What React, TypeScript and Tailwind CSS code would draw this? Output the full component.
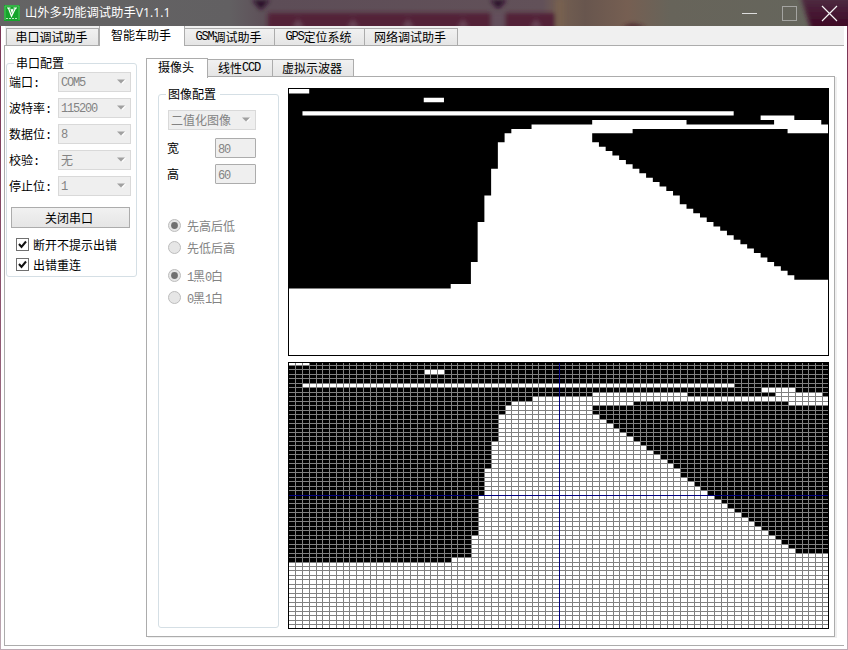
import React from "react";

const COLS = 80;
const ROWS = 60;

// White runs [row, fromCol, toCol] of the binarised camera frame.
function buildRuns(): number[][] {
  const runs: number[][] = [
    [0, 0, 3],
    [2, 20, 23],
    [5, 2, 66],
    [6, 70, 75],
    [7, 45, 59],
    [7, 72, 79],
    [8, 36, 80],
    [9, 33, 51],
    [9, 74, 80],
  ];
  const left = (r: number) =>
    r < 12 ? 32 : r < 18 ? 31 : r < 24 ? 30 : r < 30 ? 29 : r < 39 ? 28 : r < 44 ? 27 : 24;
  const right = (r: number) =>
    r < 12 ? 45 : r < 25 ? r + 34 : r + 33;
  for (let r = 10; r < 45; r++) {
    const end = r >= 43 ? COLS : right(r);
    runs.push([r, left(r), end]);
  }
  for (let r = 45; r < ROWS; r++) runs.push([r, 0, COLS]);
  return runs;
}

const RUNS = buildRuns();

function RawImage() {
  const sx = 539 / COLS;
  const sy = 266 / ROWS;
  const d = RUNS.map(
    ([r, a, b]) =>
      `M${1 + a * sx} ${1 + r * sy}H${1 + b * sx}V${1 + (r + 1) * sy}H${1 + a * sx}Z`
  ).join("");
  return (
    <svg className="block" width="541" height="268" viewBox="0 0 541 268">
      <rect width="541" height="268" fill="#000" />
      <path d={d} fill="#fff" />
    </svg>
  );
}

function GridImage() {
  const gx = (k: number) => Math.min(540, Math.max(1, Math.floor(1 + k * 6.75)));
  const gy = (k: number) => Math.min(266, Math.max(1, Math.floor(-1 + (k * 268) / 60 + 0.0001)));
  const d = RUNS.map(([r, a, b]) => `M${gx(a)} ${gy(r)}H${gx(b)}V${gy(r + 1)}H${gx(a)}Z`).join("");
  const vs = Array.from({ length: COLS - 1 }, (_, i) => `M${gx(i + 1)} 1h1v265h-1z`).join("");
  const hs = Array.from({ length: ROWS - 1 }, (_, i) => `M1 ${gy(i + 1)}h539v1h-539z`).join("");
  return (
    <svg className="block" width="541" height="267" viewBox="0 0 541 267" shapeRendering="crispEdges">
      <rect width="541" height="267" fill="#000" />
      <path d={d} fill="#fff" />
      <path d={vs} fill="#808080" />
      <path d={hs} fill="#808080" />
      <rect x={gx(40)} y="1" width="1" height="265" fill="#000080" />
      <rect x="1" y={gy(30)} width="539" height="1" fill="#000080" />
    </svg>
  );
}

// Half-width Latin text set at 6px per character.
function L({ children }: { children: React.ReactNode }) {
  return (
    <span className="font-['Liberation_Mono','Noto_Sans_CJK_SC',monospace] text-[12px] tracking-[-1.2px]">{children}</span>
  );
}

function Tab({ active, className, children }: { active?: boolean; className: string; children: React.ReactNode }) {
  return (
    <div
      className={`flex shrink-0 items-center justify-center whitespace-nowrap border border-[#acacac] pr-[2px] ${
        active ? "-mb-px border-b-0 bg-white pb-[3px]" : "bg-gradient-to-b from-[#f1f1f1] to-[#e5e5e5]"
      } ${className}`}
    >
      {children}
    </div>
  );
}

function Combo({ className, children }: { className: string; children: React.ReactNode }) {
  return (
    <div
      className={`flex h-5 items-center justify-between border border-[#d9d9d9] bg-[#efefef] pl-[2px] pr-[4px] text-[#838383] ${className}`}
    >
      <span className="leading-3">{children}</span>
      <svg width="9" height="6" viewBox="0 0 9 6">
        <path d="M2 1h7L5.500 5z" fill="#fff" />
        <path d="M0 .5h8L4 4.500z" fill="#a0a0a0" />
      </svg>
    </div>
  );
}

function Field({ label, children }: { label: React.ReactNode; children: React.ReactNode }) {
  return (
    <div className="flex h-[26px] items-start">
      <span className="w-[49px] shrink-0 leading-5">{label}</span>
      <Combo className="w-[73px]">{children}</Combo>
    </div>
  );
}

function Check({ children }: { children: React.ReactNode }) {
  return (
    <div className="flex h-5 items-start">
      <svg width="13" height="13" viewBox="0 0 13 13">
        <rect x=".5" y=".5" width="12" height="12" fill="#fff" stroke="#707070" />
        <path d="M3 6l2.500 3L10 3.500" fill="none" stroke="#111" strokeWidth="2" />
      </svg>
      <span className="ml-1 leading-[14px]">{children}</span>
    </div>
  );
}

function Radio({ on, className, children }: { on?: boolean; className: string; children: React.ReactNode }) {
  return (
    <div className={`flex items-start text-[#838383] ${className}`}>
      <svg width="13" height="13" viewBox="0 0 13 13">
        <circle cx="6.5" cy="6.5" r="6" fill="#e6e6e6" stroke="#bcbcbc" />
        {on && <circle cx="6.5" cy="6.5" r="3.4" fill="#707070" />}
      </svg>
      <span className="ml-[6px] leading-[13px]">{children}</span>
    </div>
  );
}

function Size({ label, value }: { label: string; value: string }) {
  return (
    <div className="flex h-[26px] items-start">
      <span className="w-12 leading-5">{label}</span>
      <div className="h-5 w-[41px] rounded-[1px] border border-[#acacac] bg-[#efefef] pl-[2px] leading-[17px] text-[#838383]">
        <L>{value}</L>
      </div>
    </div>
  );
}

function TitleBar() {
  return (
    <div className="relative h-[26px] w-full overflow-hidden bg-[#656565]">
      <svg className="absolute inset-0" width="848" height="26" viewBox="0 0 848 26" preserveAspectRatio="none">
        <defs>
          <linearGradient id="wall" gradientUnits="userSpaceOnUse" x1="0" y1="0" x2="848" y2="0">
            <stop offset="0" stopColor="#646464" />
            <stop offset=".27" stopColor="#626062" />
            <stop offset=".32" stopColor="#5d4d57" />
            <stop offset=".64" stopColor="#625159" />
            <stop offset=".66" stopColor="#735f51" />
            <stop offset=".69" stopColor="#68564e" />
            <stop offset=".74" stopColor="#765f52" />
            <stop offset=".79" stopColor="#67645a" />
            <stop offset="1" stopColor="#65665d" />
          </linearGradient>
          <linearGradient id="corner" x1="0" y1="0" x2="0" y2="1">
            <stop offset="0" stopColor="#513044" />
            <stop offset="1" stopColor="#3a0020" />
          </linearGradient>
          <filter id="soft" x="-20%" y="-50%" width="140%" height="200%">
            <feGaussianBlur stdDeviation="2" />
          </filter>
        </defs>
        <rect width="848" height="26" fill="url(#wall)" />
        <g filter="url(#soft)">
          <path d="M268 13H555V30H268z" fill="#532237" />
          <path d="M292 28l6-9 6 9zM347 28l6-9 6 9zM402 28l6-9 6 9zM457 28l6-9 6 9zM530 28l6-9 6 9z" fill="#6b4659" />
          <path d="M252 0h18l-9 10z" fill="#2b0d29" />
          <path d="M490 0h17l-9 9z" fill="#2b0d29" />
          <path d="M491 13h14v18h-14z" fill="#64505b" />
          <path d="M622 28q10-8 24 0z" fill="#44242a" />
          <path d="M556 0h8v28h-8z" fill="#776150" />
          <path d="M800 -5H860V32H812z" fill="url(#corner)" />
        </g>
      </svg>
      <div className="relative flex h-full items-center text-white">
        <svg className="ml-1" width="16" height="16" viewBox="0 0 16 16">
          <rect width="16" height="16" fill="#16a52c" />
          <path d="M1 15V1h14v14" fill="none" stroke="#7ed184" strokeWidth=".6" />
          <path d="M3 3h3.500M9.500 3H13M4.500 3.200l3 8 4-8M7 4l1 3 1-3" fill="none" stroke="#fff" strokeWidth="1.200" />
          <path d="M2 13.500h12" stroke="#b8e6bd" strokeWidth="1" strokeDasharray="2 1" />
        </svg>
        <span className="ml-[5px] whitespace-nowrap font-['Open_Sans','Noto_Sans_CJK_SC',sans-serif] text-[12.3px] leading-4">
          山外多功能调试助手V1.1.1
        </span>
        <svg className="ml-auto mr-[10px]" width="98" height="26" viewBox="0 0 98 26">
          <path d="M2 13.500h15" stroke="#ddd" />
          <rect x="42.500" y="6.500" width="14" height="14" fill="none" stroke="#a4a4a1" />
          <path d="M82 6l15 15M97 6L82 21" stroke="#f4f4f4" strokeWidth="1.200" />
        </svg>
      </div>
    </div>
  );
}

function SerialPanel() {
  return (
    <div className="ml-px mt-[17px] h-[214px] w-[131px] shrink-0 rounded-[3px] border border-[#d5dfe5]">
      <div className="-mt-[8px] ml-[7px] w-[54px] bg-white pl-[2px] leading-[14px]">串口配置</div>
      <div className="ml-[2px] mt-[2px]">
        <Field label={<>端口<L>:</L></>}><L>COM5</L></Field>
        <Field label={<>波特率<L>:</L></>}><L>115200</L></Field>
        <Field label={<>数据位<L>:</L></>}><L>8</L></Field>
        <Field label={<>校验<L>:</L></>}>无</Field>
        <Field label={<>停止位<L>:</L></>}><L>1</L></Field>
      </div>
      <button className="ml-1 mt-[5px] block h-[21px] w-[119px] border border-[#acacac] bg-gradient-to-b from-[#f1f1f1] to-[#e5e5e5] pr-[3px] text-center leading-[17px]">
        关闭串口
      </button>
      <div className="ml-[9px] mt-[10px]">
        <Check>断开不提示出错</Check>
        <Check>出错重连</Check>
      </div>
    </div>
  );
}

function ImageSettings() {
  return (
    <div className="ml-[11px] mt-[17px] h-[534px] w-[121px] shrink-0 rounded-[3px] border border-[#d5dfe5]">
      <div className="-mt-[8px] ml-[7px] w-[54px] bg-white pl-[2px] leading-[14px]">图像配置</div>
      <div className="ml-[9px] mt-[9px]">
        <Combo className="w-[88px]">二值化图像</Combo>
      </div>
      <div className="ml-2 mt-2">
        <Size label="宽" value="80" />
        <Size label="高" value="60" />
      </div>
      <div className="ml-[9px] mt-[29px]">
        <Radio on className="h-[22px]">先高后低</Radio>
        <Radio className="h-7">先低后高</Radio>
        <Radio on className="h-[22px]"><L>1</L>黑<L>0</L>白</Radio>
        <Radio className="h-[22px]"><L>0</L>黑<L>1</L>白</Radio>
      </div>
    </div>
  );
}

export default function App() {
  return (
    <div className="flex h-[650px] w-[848px] flex-col overflow-hidden bg-gradient-to-b from-[#783052] via-[#8d5570] to-[#bdaab4] font-['Noto_Sans_CJK_SC',sans-serif] text-[12px] text-black">
      <TitleBar />
      <div className="mx-px mb-px flex h-[623px] flex-col bg-white pl-[3px] pr-[3px]">
        <div className="flex h-5 items-end bg-[#f0f0f0] shadow-[inset_0_-1px_0_#acacac,inset_1px_0_0_#fff]">
          <Tab className="ml-[2px] h-[18px] w-[93px]">串口调试助手</Tab>
          <Tab active className="z-10 mb-0 h-5 w-[86px] border-t-0">智能车助手</Tab>
          <Tab className="h-[18px] w-[90px] border-l-0"><L>GSM</L>调试助手</Tab>
          <Tab className="h-[18px] w-[90px] border-l-0"><L>GPS</L>定位系统</Tab>
          <Tab className="h-[18px] w-[93px] border-l-0">网络调试助手</Tab>
        </div>
        <div className="flex h-[600px] border-b border-l border-[#acacac]">
          <SerialPanel />
          <div className="ml-[9px] mt-[11px] flex w-[691px] flex-col">
            <div className="flex h-5 items-end">
              <Tab active className="z-10 h-5 w-[62px]">摄像头</Tab>
              <Tab className="h-[18px] w-[65px] border-l-0">线性<L>CCD</L></Tab>
              <Tab className="h-[18px] w-[81px] border-l-0">虚拟示波器</Tab>
            </div>
            <div className="-mt-px flex h-[561px] w-[689px] border border-[#acacac] shadow-[2px_1px_0_#efefef]">
              <ImageSettings />
              <div className="ml-[9px] mt-[11px] flex flex-col gap-[6px]">
                <RawImage />
                <GridImage />
              </div>
            </div>
          </div>
        </div>
      </div>
    </div>
  );
}
